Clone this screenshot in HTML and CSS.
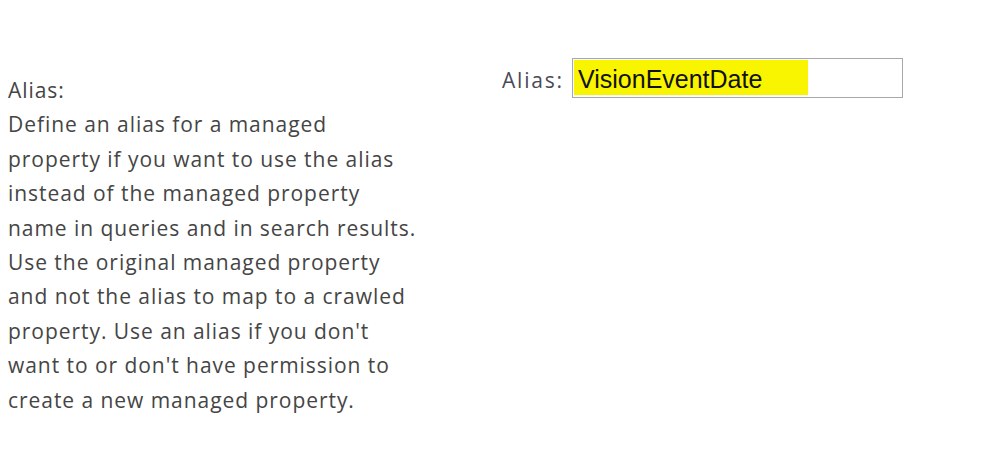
FILE: index.html
```html
<!DOCTYPE html>
<html>
<head>
<meta charset="utf-8">
<link rel="stylesheet" href="styles.css">
</head>
<body>
<div class="page">
  <div class="desc">
    <div class="desc-title">Alias:</div>
    <div class="desc-text">Define an alias for a managed<br>property if you want to use the alias<br>instead of the managed property<br>name in queries and in search results.<br>Use the original managed property<br>and not the alias to map to a crawled<br>property. Use an alias if you don't<br>want to or don't have permission to<br>create a new managed property.</div>
  </div>
  <div class="field">
    <label class="field-label">Alias:</label>
    <div class="field-box"><span class="hl">VisionEventDate</span></div>
  </div>
</div>
</body>
</html>
```
FILE: styles.css
```css
html, body {
  margin: 0;
  padding: 0;
  background: #ffffff;
}
.page {
  display: flex;
  align-items: flex-start;
  padding: 58px 0 0 8px;
  font-family: "Open Sans", "Noto Sans", sans-serif;
  color: #454545;
}
.desc {
  width: 494px;
  padding-top: 15px;
  font-size: 21px;
  letter-spacing: 0.95px;
  line-height: 34.4px;
}
.field {
  display: flex;
  align-items: center;
}
.field-label {
  font-size: 21px;
  letter-spacing: 1.8px;
  width: 70px;
  padding-top: 4px;
  color: #4a4a55;
}
.field-box {
  width: 328px;
  height: 37px;
  border: 1px solid #a8a8a8;
  box-sizing: content-box;
  padding: 1px 0 0 1px;
}
.hl {
  display: inline-block;
  background: #f9f500;
  height: 35px;
  width: 234px;
  padding-left: 4px;
  box-sizing: border-box;
  font-family: "Liberation Sans", Arial, sans-serif;
  font-size: 25px;
  line-height: 38px;
  color: #111111;
}
```
